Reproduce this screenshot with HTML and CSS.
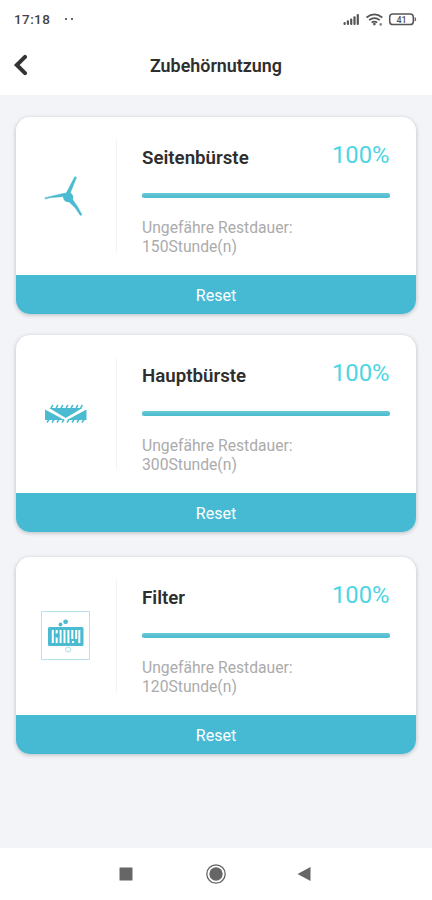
FILE: index.html
```
<!DOCTYPE html>
<html lang="de">
<head>
<meta charset="utf-8">
<title>Zubehörnutzung</title>
<link rel="stylesheet" href="styles.css">
</head>
<body>
<div class="statusbar">
  <span class="time">17:18</span>
  <span class="dots"><i></i><i></i></span>
  <svg class="status-icons" width="76" height="16" viewBox="0 0 76 16">
    <g fill="#555"><rect x="2.500" y="11" width="2.2" height="3" rx="1"/><rect x="5.8" y="9.3" width="2.2" height="4.7" rx="1"/><rect x="9.1" y="7.4" width="2.2" height="6.6" rx="1"/><rect x="12.400" y="5.2" width="2.2" height="8.8" rx="1"/><rect x="15.700" y="3" width="2.2" height="11" rx="1"/></g>
    <g fill="none" stroke="#555" stroke-width="1.700"><path d="M25.500 6.500Q33.300 .4 41.300 6.500M28.100 9.200Q33.400 5 38.800 9.200M30.600 11.600Q33.400 9.500 36.200 11.600"/></g>
    <circle cx="33.400" cy="13.100" r="1.300" fill="#555"/>
    <circle cx="39.700" cy="13.400" r="1.300" fill="#888"/>
    <rect x="48.700" y="3" width="23.600" height="10.600" rx="3.200" fill="none" stroke="#555" stroke-width="1.500"/>
    <path d="M74 6.500q1.500 1.800 0 3.600z" fill="#555" stroke="#555" stroke-width=".7"/>
    <text class="battery" x="60.500" y="11.500" text-anchor="middle">41</text>
  </svg>
</div>
<header class="header">
  <svg class="back" width="16" height="22" viewBox="0 0 16 22"><path d="M12 2.900L3.800 11l8.200 8.200" fill="none" stroke="#333" stroke-width="4" stroke-linecap="round" stroke-linejoin="miter"/></svg>
  <h1>Zubehörnutzung</h1>
</header>
<main>
  <section class="card">
    <div class="body">
      <div class="picture">
        <svg width="50" height="50" viewBox="0 -1 50 50" fill="#4abbd0">
          <path d="M26 22.500L34.800 5.600l1.700.8L29.500 24zM25 25.500L10 26.800l-5 1.300v-1.400l5-1.200L25 22zM27 29l4.300-2.500 6.500 9.500 4.200 7.700-1.700.8-5-7.500z" stroke="#4abbd0" stroke-width=".4"/>
          <circle cx="28.200" cy="26.200" r="5"/>
        </svg>
      </div>
      <div class="info">
        <div class="row"><h2>Seitenbürste</h2><span class="percent">100%</span></div>
        <div class="bar"></div>
        <p>Ungefähre Restdauer:<br>150Stunde(n)</p>
      </div>
    </div>
    <button>Reset</button>
  </section>
  <section class="card">
    <div class="body">
      <div class="picture">
        <svg width="50" height="50" viewBox="0 0 50 50" fill="#4abbd0">
          <path d="M5 21.500L24.500 32H5zM46.500 21.500L27 32h19.500zM9 20h33.500L25.700 30z"/>
          <path d="M11 20l2-3M16 20l2-3M21 20l2-3M26 20l2-3M31 20l2-3M36 20l2-3M40.500 20l2-3M7 34.500l2-3M12 34.500l2-3M17 34.500l2-3M22 34.500l2-3M27 34.500l2-3M32 34.500l2-3M37 34.500l2-3M42 34.500l2-3" stroke="#4abbd0" stroke-width="1.500" fill="none"/>
          <path d="M7.500 21L25.700 31.300 44 21" fill="none" stroke="#fff" stroke-width="1.200"/>
        </svg>
      </div>
      <div class="info">
        <div class="row"><h2>Hauptbürste</h2><span class="percent">100%</span></div>
        <div class="bar"></div>
        <p>Ungefähre Restdauer:<br>300Stunde(n)</p>
      </div>
    </div>
    <button>Reset</button>
  </section>
  <section class="card">
    <div class="body">
      <div class="picture">
        <svg width="50" height="50" viewBox="0 0 50 50">
          <path d="M1.500 49.500v-48h48v48M1.500 49.500h48" fill="none" stroke="#b8e1ea"/>
          <rect x="8" y="17" width="35.500" height="19" rx="1.500" fill="#4abbd0"/>
          <path d="M12.800 20v13M16.700 20v4M16.700 27v6M20.600 20v13M24.500 20v13M28.400 20v13M32.300 20v9M33 31v2M36.200 20v9M39.300 20v13" stroke="#fff" stroke-width="2"/>
          <circle cx="17.500" cy="25.500" r="2.200" fill="#4abbd0"/>
          <circle cx="20.500" cy="14.500" r="1.900" fill="#4abbd0"/>
          <circle cx="25.600" cy="11.800" r="2.400" fill="#4abbd0"/>
          <circle cx="28.200" cy="39.500" r="2.500" fill="#fff" stroke="#a9dbe5" stroke-width="1"/>
        </svg>
      </div>
      <div class="info">
        <div class="row"><h2>Filter</h2><span class="percent">100%</span></div>
        <div class="bar"></div>
        <p>Ungefähre Restdauer:<br>120Stunde(n)</p>
      </div>
    </div>
    <button>Reset</button>
  </section>
</main>
<nav class="navbar">
  <svg width="20" height="20" viewBox="0 0 20 20"><rect x="3.500" y="3.500" width="13" height="13" rx=".5" fill="#666"/></svg>
  <svg width="20" height="20" viewBox="0 0 20 20"><circle cx="10" cy="10" r="9.200" fill="none" stroke="#666" stroke-width="1.300"/><circle cx="10" cy="10" r="6.700" fill="#666"/></svg>
  <svg width="20" height="20" viewBox="0 0 20 20"><path d="M3.500 10L16.500 3v14z" fill="#666"/></svg>
</nav>
</body>
</html>
```
FILE: styles.css
```
* { box-sizing: border-box; }
body {
  margin: 0;
  height: 900px;
  display: flex;
  flex-direction: column;
  font-family: Roboto, "Liberation Sans", sans-serif;
  color: #2e2e2e;
  background: #f3f4f8;
  overflow: hidden;
}
.statusbar {
  height: 38px;
  padding: 0 15px 0 14px;
  display: flex;
  align-items: center;
  background: #fff;
}
.time { font-size: 13.500px; font-weight: 500; letter-spacing: .4px; color: #444; line-height: 38px; }
.dots { display: flex; gap: 4px; margin-left: 15px; }
.dots i { width: 2px; height: 2px; border-radius: 50%; background: #333; }
.status-icons { margin-left: auto; margin-top: -1px; }
.battery { font-size: 9px; font-weight: 500; fill: #555; }
.header {
  height: 57px;
  padding: 0 13px;
  display: grid;
  grid-template-columns: 16px 1fr 16px;
  align-items: center;
  background: #fff;
}
.back { margin: -3px 0 0 -.500px; }
h1 { margin: 0 0 2px; font-size: 17.900px; font-weight: 600; text-align: center; line-height: 54px; }
main { flex: 1; padding: 22px 16px 0; }
.card {
  height: 196.500px;
  margin-bottom: 21.800px;
  border-radius: 14px;
  overflow: hidden;
  background: #fff;
  box-shadow: 0 1px 4px rgba(0, 0, 0, .24);
}
.card:last-child { margin-top: 25.400px; }
.body { height: 158px; display: flex; }
.picture {
  width: 101px;
  height: 112px;
  margin-top: 23px;
  padding: 0 2px 2px 0;
  display: flex;
  align-items: center;
  justify-content: center;
  border-right: 1px solid #f3f3f5;
}
.info { flex: 1; padding: 22px 26px 0 25px; }
.row { display: flex; justify-content: space-between; height: 54px; }
h2 { margin: 0; font-size: 18.700px; font-weight: 600; line-height: 38.500px; }
.percent { font-size: 23.800px; line-height: 32px; margin-right: .500px; color: #4dd5e4; }
.bar { height: 5px; border-radius: 2px; background: linear-gradient(#66c9d8, #4bbbcd); }
p { margin: 21px 0 0; font-size: 15.700px; line-height: 18.500px; color: #ababab; }
button {
  display: block;
  width: 100%;
  height: 38.500px;
  padding: 2px 0 0;
  border: 0;
  background: #47bad3;
  color: #fff;
  font: 400 16px Roboto, sans-serif;
}
.navbar {
  height: 52px;
  padding: 0 118px 0 116px;
  display: flex;
  align-items: center;
  justify-content: space-between;
  background: #fff;
}
.navbar svg:nth-child(2) { margin-left: 2px; }
```
